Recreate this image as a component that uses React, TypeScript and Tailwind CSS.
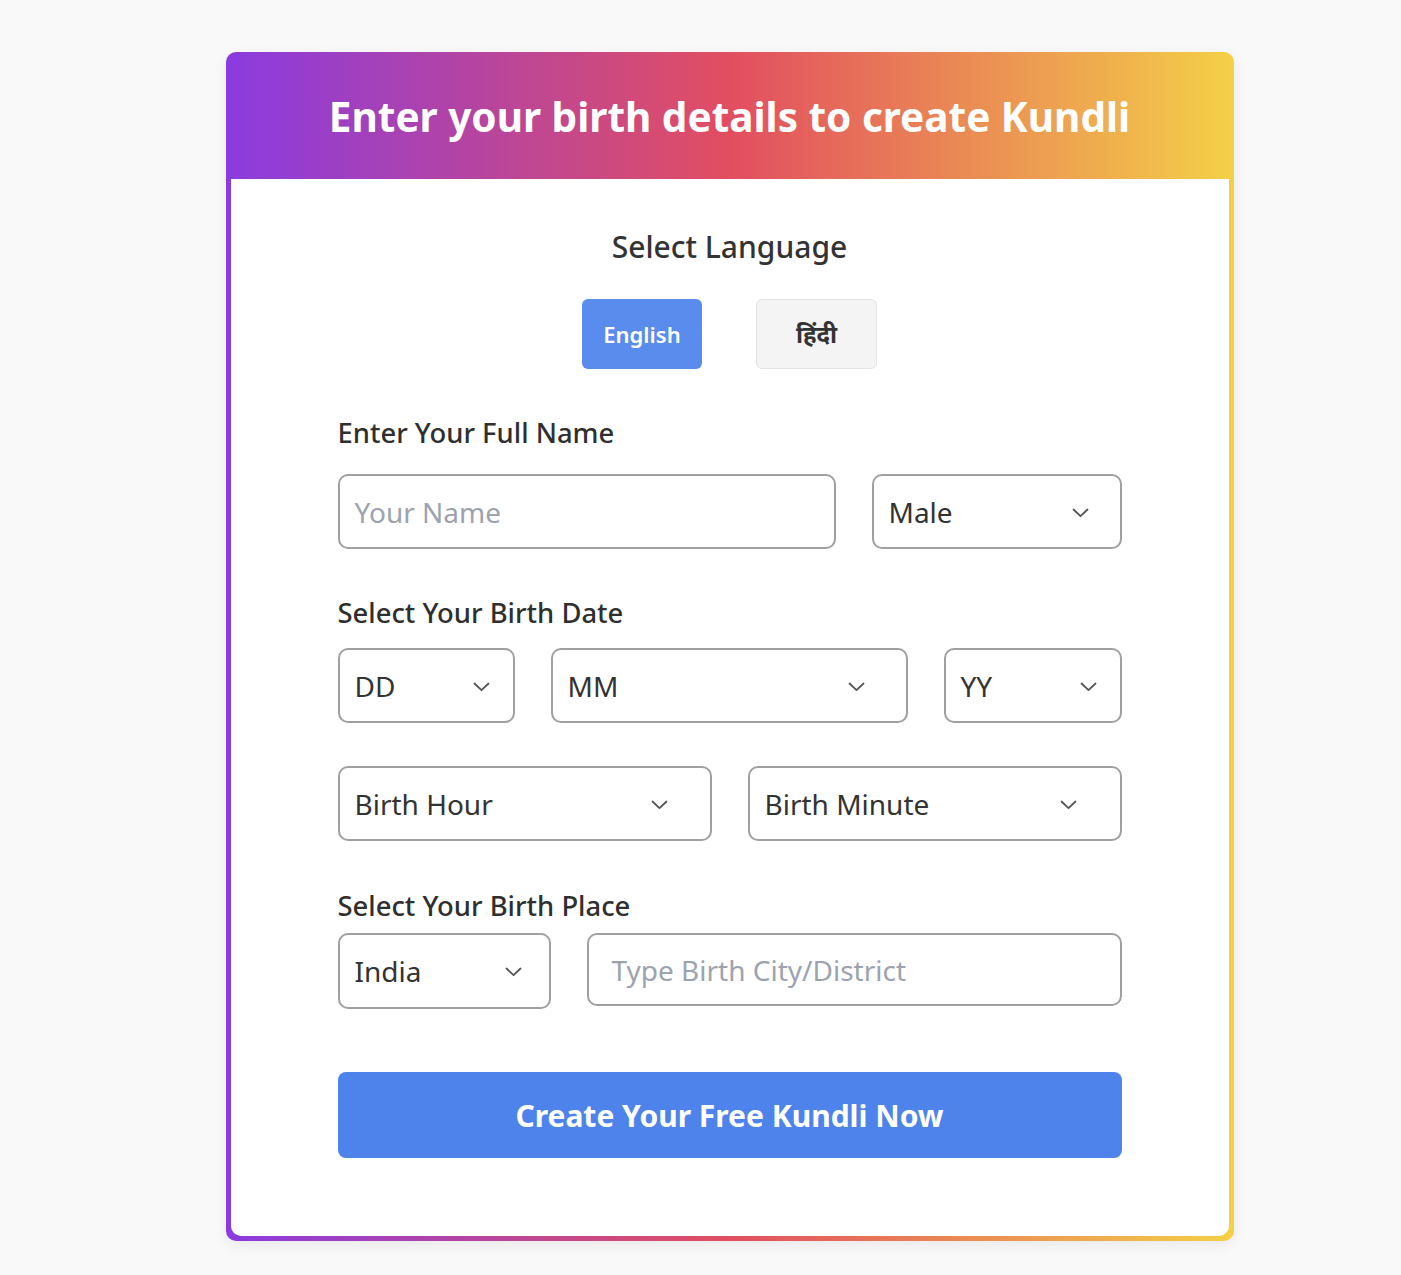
import React from "react";

function Chevron() {
  return (
    <svg width="17" height="10" viewBox="0 0 17 10" fill="none" className="shrink-0 mt-[2px]">
      <path d="M1.5 1.5L8.5 8.2L15.5 1.5" stroke="#555" strokeWidth="1.8" strokeLinecap="round" strokeLinejoin="round" />
    </svg>
  );
}

function Select({ label, className }: { label: string; className: string }) {
  return (
    <div
      className={
        "shrink-0 flex items-center justify-between border-2 border-[#a0a0a0] rounded-[10px] bg-white pl-[15px] text-[28px] text-[#333] " +
        className
      }
    >
      <span>{label}</span>
      <Chevron />
    </div>
  );
}

export default function App() {
  return (
    <div
      className="min-h-screen bg-[#f9f9f9] pt-[52px] pb-[34px] pl-[58px] flex justify-center"
      style={{ fontFamily: '"Noto Sans", "Open Sans", "Noto Sans Devanagari", sans-serif' }}
    >
      <div className="w-[1008px] rounded-[10px] p-[5px] pt-0 bg-[linear-gradient(90deg,#8a3be0_0%,#e24e60_50%,#f4d047_100%)] shadow-[0_4px_14px_rgba(0,0,0,0.07)]">
        <div className="h-[127px] flex items-center justify-center">
          <h1 className="text-white font-bold text-[40.5px] leading-[50px] mt-[2px]">
            Enter your birth details to create Kundli
          </h1>
        </div>
        <div className="bg-white rounded-b-[10px] px-[107px] pt-[48px] pb-[78px]">
          <h2 className="text-center text-[30px] leading-[40px] font-medium text-[#333]">Select Language</h2>
          <div className="flex justify-center gap-[54px] mt-[32px]">
            <button className="w-[120px] h-[70px] rounded-[6px] bg-[#5a8cee] text-white font-semibold text-[22px]">
              English
            </button>
            <button className="w-[121px] h-[70px] rounded-[6px] bg-[#f4f4f4] border border-[#e3e3e3] text-[#333] font-bold text-[24px]">
              हिंदी
            </button>
          </div>

          <div className="mt-[45px] text-[27.4px] leading-[38px] font-medium text-[#2f2f2f]">Enter Your Full Name</div>
          <div className="flex gap-[36px] mt-[22px]">
            <div className="shrink-0 w-[498px] h-[75px] flex items-center border-2 border-[#a0a0a0] rounded-[10px] pl-[15px] text-[28px] text-[#9ca3af]">
              Your Name
            </div>
            <Select label="Male" className="w-[250px] h-[75px] pr-[31px]" />
          </div>

          <div className="mt-[45px] text-[27.4px] leading-[38px] font-medium text-[#2f2f2f]">Select Your Birth Date</div>
          <div className="flex gap-[36px] mt-[16px]">
            <Select label="DD" className="w-[177px] h-[75px] pr-[23px]" />
            <Select label="MM" className="w-[357px] h-[75px] pr-[41px]" />
            <Select label="YY" className="w-[178px] h-[75px] pr-[23px]" />
          </div>
          <div className="flex gap-[36px] mt-[43px]">
            <Select label="Birth Hour" className="w-[374px] h-[75px] pr-[42px]" />
            <Select label="Birth Minute" className="w-[374px] h-[75px] pr-[43px]" />
          </div>

          <div className="mt-[46px] text-[27.4px] leading-[38px] font-medium text-[#2f2f2f]">Select Your Birth Place</div>
          <div className="flex gap-[36px] mt-[8px] items-start">
            <Select label="India" className="w-[213px] h-[76px] pr-[27px]" />
            <div className="shrink-0 w-[535px] h-[73px] flex items-center border-2 border-[#a0a0a0] rounded-[10px] pl-[23px] text-[28px] text-[#9ca3af]">
              Type Birth City/District
            </div>
          </div>

          <button className="mt-[63px] w-full h-[86px] rounded-[8px] bg-[#4f83ec] text-white font-bold text-[30px]">
            Create Your Free Kundli Now
          </button>
        </div>
      </div>
    </div>
  );
}
